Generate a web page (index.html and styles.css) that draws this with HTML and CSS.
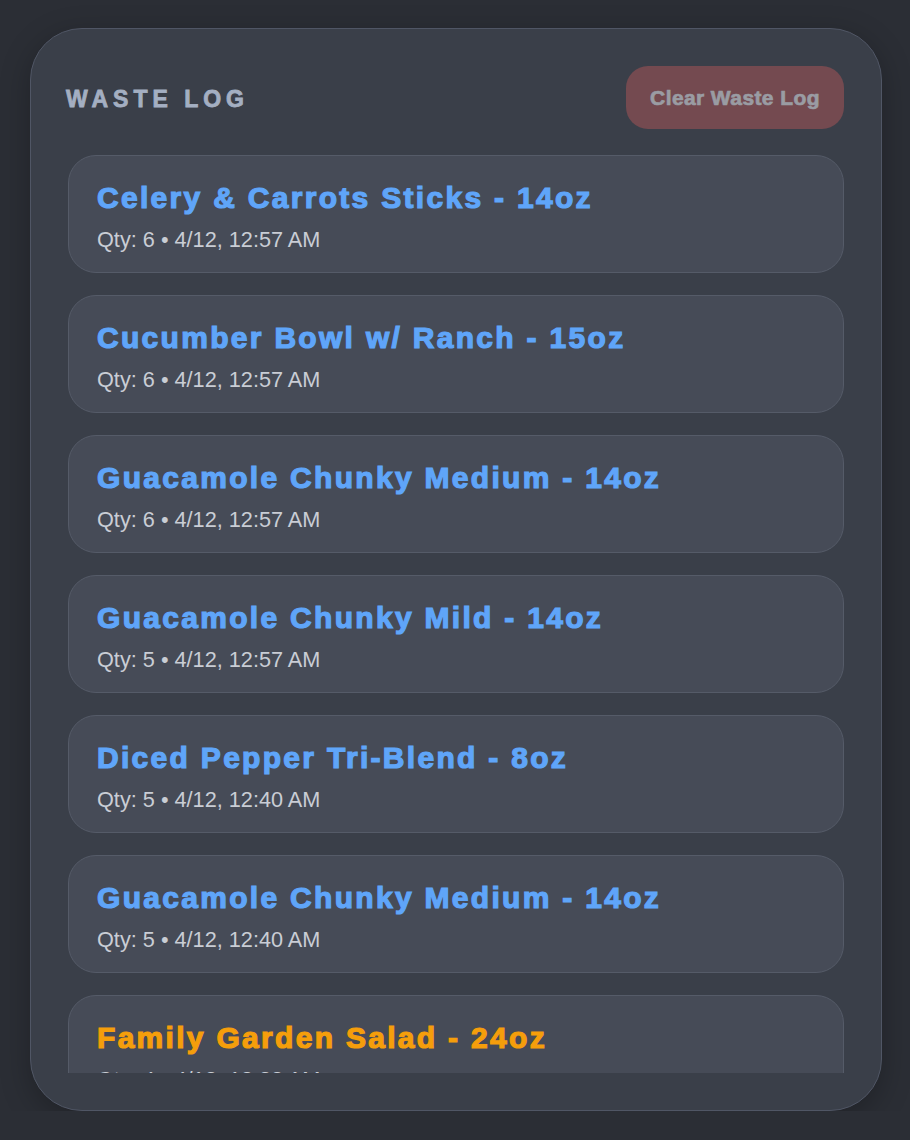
FILE: index.html
```html
<!DOCTYPE html>
<html lang="en">
<head>
    <meta charset="UTF-8">
    <meta name="viewport" content="width=device-width, initial-scale=1.0">
    <title>Waste Log</title>
    <link rel="stylesheet" href="styles.css">
</head>
<body>
    <div class="panel">
        <div class="panel-header">
            <h2 class="panel-title">WASTE LOG</h2>
            <button class="clear-btn">Clear Waste Log</button>
        </div>

        <div class="log-list">
            <div class="log-item">
                <div class="item-name">Celery &amp; Carrots Sticks - 14oz</div>
                <div class="item-meta">Qty: 6 • 4/12, 12:57 AM</div>
            </div>
            <div class="log-item">
                <div class="item-name">Cucumber Bowl w/ Ranch - 15oz</div>
                <div class="item-meta">Qty: 6 • 4/12, 12:57 AM</div>
            </div>
            <div class="log-item">
                <div class="item-name">Guacamole Chunky Medium - 14oz</div>
                <div class="item-meta">Qty: 6 • 4/12, 12:57 AM</div>
            </div>
            <div class="log-item">
                <div class="item-name">Guacamole Chunky Mild - 14oz</div>
                <div class="item-meta">Qty: 5 • 4/12, 12:57 AM</div>
            </div>
            <div class="log-item">
                <div class="item-name">Diced Pepper Tri-Blend - 8oz</div>
                <div class="item-meta">Qty: 5 • 4/12, 12:40 AM</div>
            </div>
            <div class="log-item">
                <div class="item-name">Guacamole Chunky Medium - 14oz</div>
                <div class="item-meta">Qty: 5 • 4/12, 12:40 AM</div>
            </div>
            <div class="log-item">
                <div class="item-name salad">Family Garden Salad - 24oz</div>
                <div class="item-meta">Qty: 4 • 4/12, 12:33 AM</div>
            </div>
            <div class="log-item">
                <div class="item-name">Celery &amp; Carrots Sticks - 14oz</div>
                <div class="item-meta">Qty: 4 • 4/12, 12:33 AM</div>
            </div>
        </div>
    </div>
</body>
</html>
```

FILE: styles.css
```css
body {
    margin: 0;
    background-color: #2b2e35;
    font-family: 'Liberation Sans', Arial, sans-serif;
}

.panel {
    box-sizing: border-box;
    width: 852px;
    height: 1083px;
    margin: 28px 0 0 30px;
    padding: 37px 37px 37px 35px;
    background-color: #3a3f49;
    border: 1px solid #505665;
    border-radius: 52px;
    box-shadow: 0 8px 30px rgba(0, 0, 0, 0.25);
    display: flex;
    flex-direction: column;
}

.panel-header {
    display: flex;
    justify-content: space-between;
    align-items: center;
    margin-bottom: 26px;
}

.panel-title {
    margin: 0;
    padding-top: 4px;
    font-size: 23px;
    font-weight: bold;
    letter-spacing: 5px;
    color: #a4afc2;
    -webkit-text-stroke: 0.8px #a4afc2;
}

.clear-btn {
    height: 63px;
    width: 218px;
    border: none;
    border-radius: 22px;
    background-color: #744a50;
    color: #9a9ca3;
    font-family: inherit;
    font-size: 21px;
    font-weight: bold;
    letter-spacing: 0.4px;
    -webkit-text-stroke: 0.7px #9a9ca3;
    cursor: pointer;
}

.log-list {
    flex: 1;
    overflow: hidden;
    margin-left: 2px;
    display: flex;
    flex-direction: column;
    gap: 22px;
}

.log-item {
    flex-shrink: 0;
    padding: 25px 28px 20px;
    background-color: #464b57;
    border: 1px solid #555b68;
    border-radius: 28px;
}

.item-name {
    font-size: 30px;
    line-height: 34px;
    font-weight: bold;
    letter-spacing: 2.3px;
    color: #5fa5f9;
    -webkit-text-stroke: 1.2px #5fa5f9;
    margin-bottom: 12px;
}

.item-name.salad {
    color: #f59e0b;
    -webkit-text-stroke-color: #f59e0b;
}

.item-meta {
    font-size: 21.7px;
    line-height: 25px;
    color: #c9cdd5;
}
```
